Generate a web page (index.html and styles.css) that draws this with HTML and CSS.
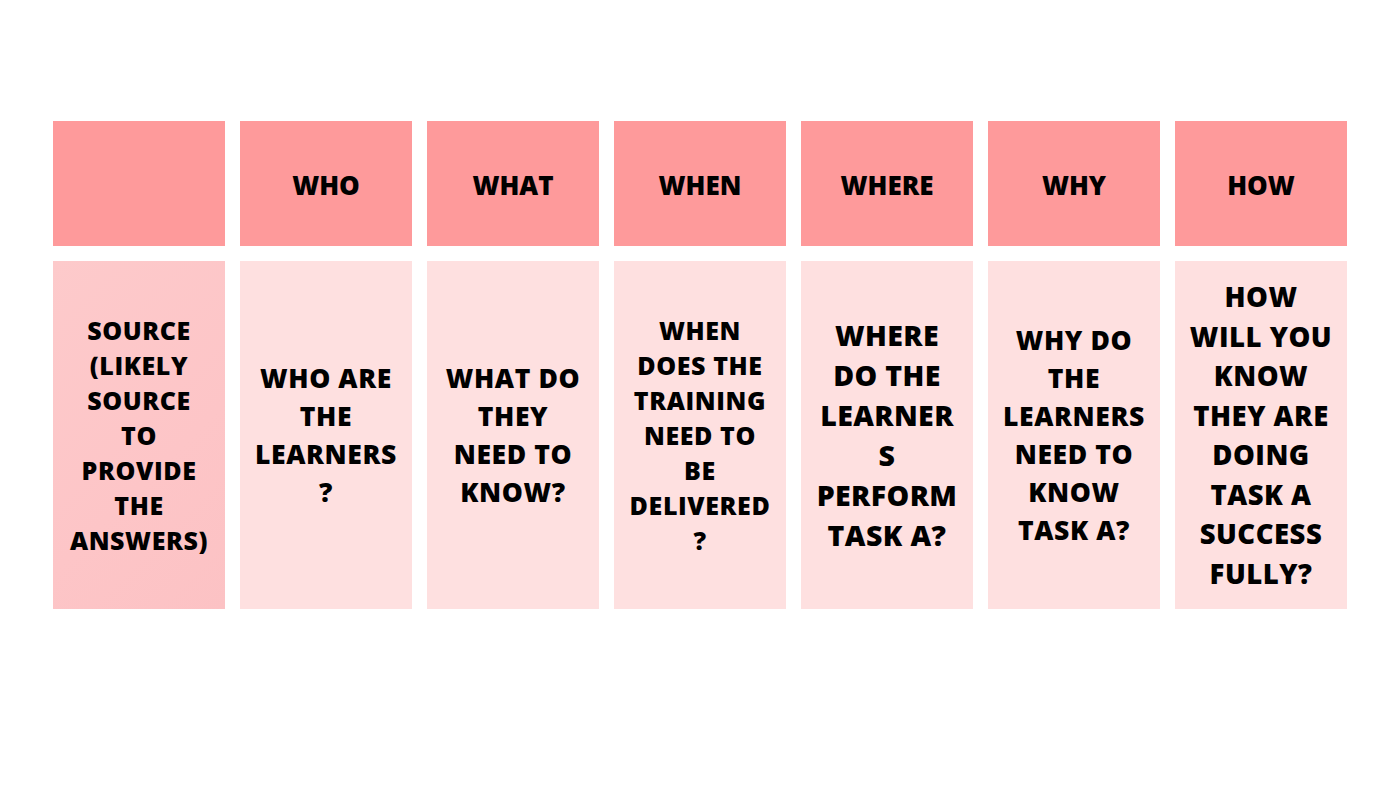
FILE: index.html
```html
<!DOCTYPE html>
<html>
<head>
<meta charset="utf-8">
<link rel="stylesheet" href="styles.css">
</head>
<body>
<div class="board">
  <div class="row head">
    <div class="cell"></div>
    <div class="cell">WHO</div>
    <div class="cell">WHAT</div>
    <div class="cell">WHEN</div>
    <div class="cell">WHERE</div>
    <div class="cell">WHY</div>
    <div class="cell">HOW</div>
  </div>
  <div class="row body">
    <div class="cell first s22">SOURCE<br>(LIKELY<br>SOURCE<br>TO<br>PROVIDE<br>THE<br>ANSWERS)</div>
    <div class="cell s24">WHO ARE<br>THE<br>LEARNERS<br>?</div>
    <div class="cell s24">WHAT DO<br>THEY<br>NEED TO<br>KNOW?</div>
    <div class="cell s22">WHEN<br>DOES THE<br>TRAINING<br>NEED TO<br>BE<br>DELIVERED<br>?</div>
    <div class="cell s26">WHERE<br>DO THE<br>LEARNER<br>S<br>PERFORM<br>TASK A?</div>
    <div class="cell s24">WHY DO<br>THE<br>LEARNERS<br>NEED TO<br>KNOW<br>TASK A?</div>
    <div class="cell s25">HOW<br>WILL YOU<br>KNOW<br>THEY ARE<br>DOING<br>TASK A<br>SUCCESS<br>FULLY?</div>
  </div>
</div>
</body>
</html>
```
FILE: styles.css
```css
html, body {
  margin: 0;
  padding: 0;
  background: #ffffff;
}
body {
  width: 1400px;
  height: 788px;
  font-family: "Open Sans", "Liberation Sans", sans-serif;
  color: #000000;
}
.board {
  padding: 121px 0 0 53px;
  display: flex;
  flex-direction: column;
  gap: 15px;
}
.row {
  display: grid;
  grid-template-columns: repeat(7, 172px);
  column-gap: 15px;
}
.cell {
  display: flex;
  align-items: center;
  justify-content: center;
  text-align: center;
  font-weight: 800;
}
.head .cell {
  height: 125px;
  background: #fe9a9b;
  font-size: 26px;
  line-height: 1;
  padding-top: 2px;
  box-sizing: border-box;
}
.body .cell {
  height: 348px;
  background: #fee0e0;
}
.body .cell.first {
  background: linear-gradient(135deg, #fdcacb 0%, #fdc5c7 60%, #fcc2c4 100%);
}
.s22 { font-size: 25px; line-height: 35px; letter-spacing: 0.6px; }
.s24 { font-size: 26.5px; line-height: 38px; letter-spacing: 0.6px; }
.s25 { font-size: 27.5px; line-height: 39.5px; letter-spacing: 0.5px; }
.s26 { font-size: 28.5px; line-height: 40px; letter-spacing: 0.4px; }
```
